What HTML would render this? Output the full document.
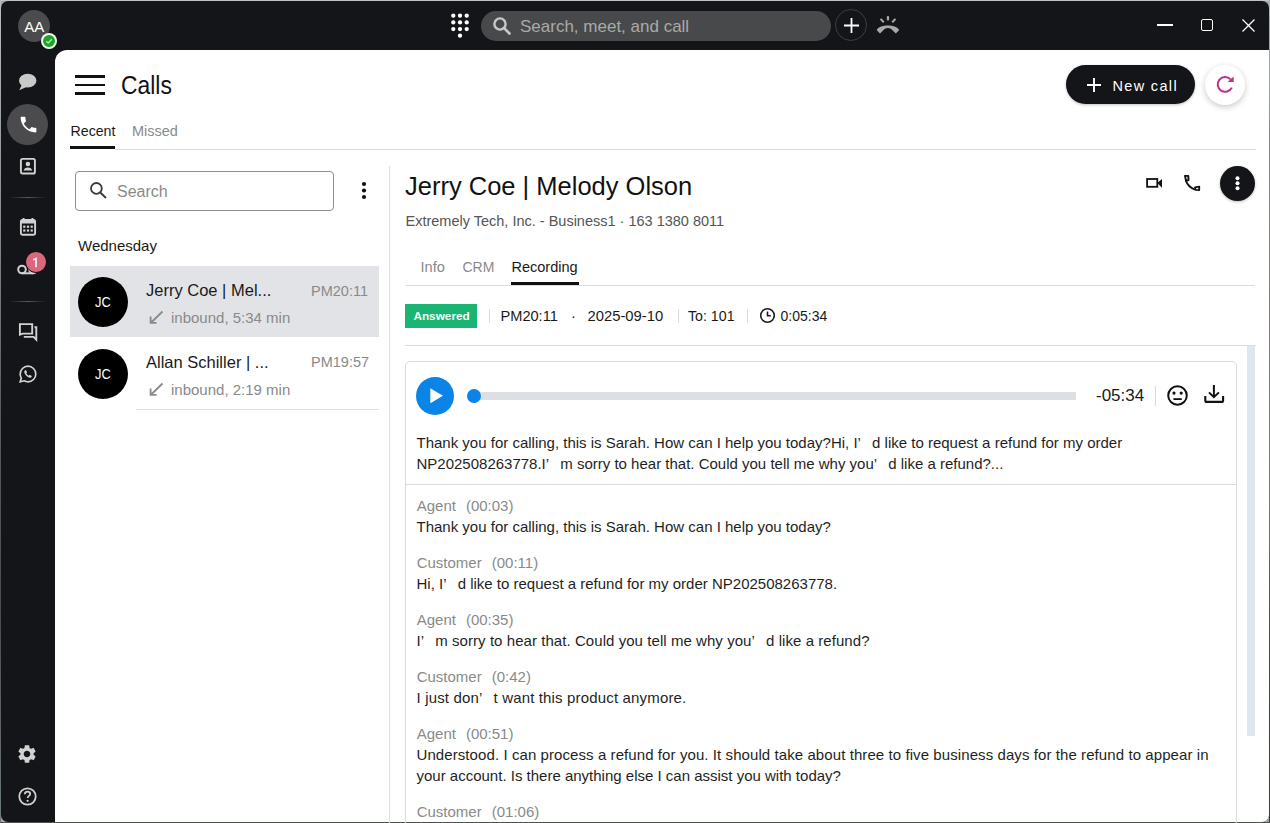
<!DOCTYPE html>
<html><head><meta charset="utf-8">
<style>
*{margin:0;padding:0;box-sizing:border-box}
html,body{width:1270px;height:823px;overflow:hidden;background:#a3a7aa;font-family:"Liberation Sans",sans-serif}
body{position:relative}
.a{position:absolute}
.t{position:absolute;white-space:nowrap;line-height:1}
svg{position:absolute;overflow:visible}
.q{display:inline-block;width:14.5px}
.lbl{font-size:15px;color:#8a8a8a}
.txt{font-size:15px;line-height:21px;color:#1f1f1f;white-space:nowrap}
</style></head><body>
<!-- window frame -->
<div class="a" style="left:0;top:0;width:1270px;height:1px;background:#bfc3c6"></div>
<div class="a" style="left:0;top:0;width:1px;height:823px;background:linear-gradient(#b9bdc0,#8c8f92 25%,#585a5e 50%,#4a4d50 75%,#6d7a74)"></div>
<div class="a" style="left:1269px;top:0;width:1px;height:823px;background:linear-gradient(#b0b4b6,#888 18%,#7a7570 61%,#4a4540 79%,#3a3a3a)"></div>
<div class="a" style="left:0;top:822px;width:1270px;height:1px;background:#505250"></div>
<div class="a" style="left:1px;top:1px;width:1268px;height:821px;background:#141518;border-radius:7px"></div>
<!-- white panel -->
<div class="a" style="left:55px;top:50px;width:1214px;height:772px;background:#fff;border-top-left-radius:12px;border-bottom-right-radius:7px"></div>

<!-- ===== TITLE BAR ===== -->
<div class="a" style="left:18px;top:10px;width:32px;height:32px;border-radius:50%;background:#4b4b4d"></div>
<div class="t" style="left:24.3px;top:19.2px;font-size:15px;color:#fff">AA</div>
<div class="a" style="left:41px;top:33px;width:16px;height:16px;border-radius:50%;background:#eaffea"></div>
<div class="a" style="left:43px;top:35px;width:12px;height:12px;border-radius:50%;background:#22a22c"></div>
<svg style="left:43px;top:35px" width="12" height="12" viewBox="0 0 12 12"><path d="M3.3 6.2 L5.2 8 L8.8 4.2" fill="none" stroke="#9ff59f" stroke-width="1.4"/></svg>

<!-- dialpad -->
<svg style="left:450px;top:13px" width="20" height="25" viewBox="0 0 20 25">
 <g fill="#fff">
  <circle cx="3.3" cy="2.7" r="2.15"/><circle cx="10" cy="2.7" r="2.15"/><circle cx="16.7" cy="2.7" r="2.15"/>
  <circle cx="3.3" cy="9.4" r="2.15"/><circle cx="10" cy="9.4" r="2.15"/><circle cx="16.7" cy="9.4" r="2.15"/>
  <circle cx="3.3" cy="16.1" r="2.15"/><circle cx="10" cy="16.1" r="2.15"/><circle cx="16.7" cy="16.1" r="2.15"/>
  <circle cx="10" cy="22.7" r="2.15"/>
 </g>
</svg>
<!-- search pill -->
<div class="a" style="left:481px;top:11px;width:350px;height:30px;border-radius:15px;background:#48494b"></div>
<svg style="left:492px;top:16px" width="20" height="20" viewBox="0 0 20 20"><circle cx="8" cy="8" r="5.6" fill="none" stroke="#c8c8c8" stroke-width="2.4"/><path d="M12 12 L17.5 17.5" stroke="#c8c8c8" stroke-width="2.6" stroke-linecap="round"/></svg>
<div class="t" style="left:520px;top:17.6px;font-size:17px;color:#a9a9a9">Search, meet, and call</div>
<!-- plus circle -->
<div class="a" style="left:835px;top:9px;width:32px;height:32px;border-radius:50%;border:1px solid #3c3d40"></div>
<svg style="left:844px;top:17.5px" width="15" height="15" viewBox="0 0 15 15"><path d="M7.5 0 V15 M0 7.5 H15" stroke="#fff" stroke-width="1.8"/></svg>
<!-- park/hangup icon -->
<svg style="left:876px;top:15px" width="24" height="19" viewBox="0 0 24 19">
 <g fill="#a9a9a9">
  <rect x="10.8" y="1" width="2.3" height="4.6" rx="1"/>
  <path d="M3.8 4.6 l1.5-1.4 3.2 3.3 -1.5 1.4z"/>
  <path d="M20.2 4.6 l-1.5-1.4 -3.2 3.3 1.5 1.4z"/>
  <path d="M0.6 15 C3 11.2 7 10.4 11.9 10.4 C16.8 10.4 20.8 11.2 23.2 15 L19.8 18.4 L16.2 14.9 C14.9 13.8 13.5 13.1 11.9 13.1 C10.3 13.1 8.9 13.8 7.6 14.9 L4 18.4 Z"/>
 </g>
</svg>
<!-- window controls -->
<div class="a" style="left:1157px;top:24px;width:16px;height:2px;background:#fff"></div>
<div class="a" style="left:1201px;top:19px;width:12px;height:12px;border:1.4px solid #fff;border-radius:2px"></div>
<svg style="left:1242px;top:19px" width="13" height="13" viewBox="0 0 13 13"><path d="M0.5 0.5 L12.5 12.5 M12.5 0.5 L0.5 12.5" stroke="#fff" stroke-width="1.3"/></svg>

<!-- ===== LEFT RAIL ===== -->
<!-- chat bubble -->
<svg style="left:18px;top:73px" width="19" height="18" viewBox="0 0 19 18"><ellipse cx="9.7" cy="7.7" rx="8.7" ry="6.9" fill="#c9c9c9"/><path d="M4 11.5 L1.2 17.2 L9 13.8 Z" fill="#c9c9c9"/></svg>
<!-- active phone -->
<div class="a" style="left:7px;top:104px;width:41px;height:41px;border-radius:50%;background:#4b4b4d"></div>
<svg style="left:17.5px;top:113.5px" width="21" height="21" viewBox="0 0 24 24"><path fill="#fff" d="M6.6 10.8c1.4 2.8 3.8 5.1 6.6 6.6l2.2-2.2c.3-.3.7-.4 1-.2 1.1.4 2.3.6 3.6.6.6 0 1 .4 1 1V20c0 .6-.4 1-1 1C10.6 21 3 13.4 3 4c0-.6.4-1 1-1h3.5c.6 0 1 .4 1 1 0 1.3.2 2.5.6 3.6.1.3 0 .7-.2 1l-2.3 2.2z"/></svg>
<!-- contacts -->
<svg style="left:19px;top:157px" width="18" height="18" viewBox="0 0 18 18"><rect x="1.9" y="1.9" width="14" height="14.6" rx="1.6" fill="none" stroke="#d2d2d2" stroke-width="1.9"/><circle cx="8.9" cy="7" r="2.3" fill="#d2d2d2"/><path d="M4.6 13.4 C5 11.3 6.6 10.4 8.9 10.4 C11.2 10.4 12.8 11.3 13.2 13.4Z" fill="#d2d2d2"/></svg>
<!-- divider -->
<div class="a" style="left:9px;top:197px;width:37px;height:1px;background:linear-gradient(90deg,rgba(80,80,80,0),#5a5a5a 50%,rgba(80,80,80,0))"></div>
<!-- calendar -->
<svg style="left:19px;top:217px" width="18" height="19" viewBox="0 0 18 19"><rect x="1.9" y="2.9" width="14.2" height="14.9" rx="1.8" fill="none" stroke="#d2d2d2" stroke-width="1.9"/><rect x="1.9" y="2.9" width="14.2" height="3.6" fill="#d2d2d2"/><path d="M4.6 1 V4 M13.4 1 V4" stroke="#d2d2d2" stroke-width="1.9"/><g fill="#d2d2d2"><rect x="4.2" y="8.6" width="2.2" height="2.2"/><rect x="7.9" y="8.6" width="2.2" height="2.2"/><rect x="11.6" y="8.6" width="2.2" height="2.2"/><rect x="4.2" y="12.4" width="2.2" height="2.2"/><rect x="7.9" y="12.4" width="2.2" height="2.2"/><rect x="11.6" y="12.4" width="2.2" height="2.2"/></g></svg>
<!-- voicemail -->
<svg style="left:17px;top:264px" width="21" height="11" viewBox="0 0 21 11"><circle cx="5" cy="5.5" r="3.8" fill="none" stroke="#d2d2d2" stroke-width="2"/><circle cx="16" cy="5.5" r="3.8" fill="none" stroke="#d2d2d2" stroke-width="2"/><path d="M5 9.3 H16" stroke="#d2d2d2" stroke-width="2"/></svg>
<div class="a" style="left:24.6px;top:250.6px;width:22.4px;height:22.4px;border-radius:50%;background:#d9687c;border:1.5px solid #160c10"></div>
<svg style="left:30px;top:256px" width="10" height="13" viewBox="0 0 10 13"><path d="M3.3 3.9 L6 2.5 V11.2" fill="none" stroke="#fff" stroke-width="1.5"/></svg>
<!-- divider 2 -->
<div class="a" style="left:9px;top:301px;width:37px;height:1px;background:linear-gradient(90deg,rgba(80,80,80,0),#5a5a5a 50%,rgba(80,80,80,0))"></div>
<!-- forum -->
<svg style="left:18px;top:322px" width="20" height="19" viewBox="0 0 20 19"><path d="M1.9 12.6 V2.1 H14.2 V11.6 H4.8 Z" fill="none" stroke="#d2d2d2" stroke-width="1.9" stroke-linejoin="miter"/><path d="M5.8 14.9 H15.6 L18.3 17.6 V5.3 H16.5" fill="none" stroke="#d2d2d2" stroke-width="1.9"/></svg>
<!-- whatsapp -->
<svg style="left:18.5px;top:364.8px" width="18" height="18" viewBox="0 0 18 18"><path d="M9 1.2 C13.3 1.2 16.8 4.7 16.8 9 C16.8 13.3 13.3 16.8 9 16.8 C7.6 16.8 6.3 16.4 5.1 15.8 L1.2 16.8 L2.3 13.1 C1.6 11.9 1.2 10.5 1.2 9 C1.2 4.7 4.7 1.2 9 1.2Z" fill="none" stroke="#d2d2d2" stroke-width="1.7"/><path d="M6.3 5.3 C6.7 5.1 7.1 5.2 7.3 5.6 L7.9 7 C8 7.3 7.9 7.6 7.6 7.9 L7.3 8.2 C7.8 9.2 8.7 10.1 9.8 10.7 L10.2 10.3 C10.5 10 10.8 10 11.1 10.1 L12.4 10.7 C12.8 10.9 12.9 11.3 12.7 11.7 C12.3 12.5 11.5 12.9 10.6 12.7 C8.3 12.1 5.9 9.7 5.3 7.4 C5.1 6.5 5.5 5.7 6.3 5.3Z" fill="#d2d2d2"/></svg>
<!-- settings -->
<svg style="left:16.3px;top:743px" width="22" height="22" viewBox="0 0 24 24"><path fill="#d2d2d2" d="M19.14 12.94c.04-.3.06-.61.06-.94 0-.32-.02-.64-.07-.94l2.030-1.58c.18-.14.23-.41.12-.61l-1.92-3.32c-.12-.22-.37-.29-.59-.22l-2.39.96c-.5-.38-1.03-.7-1.62-.94l-.36-2.540c-.04-.24-.24-.41-.48-.41h-3.84c-.24 0-.43.17-.47.41l-.36 2.54c-.59.24-1.13.57-1.62.94l-2.39-.96c-.22-.08-.47 0-.59.22L2.74 8.87c-.12.21-.08.47.12.61l2.03 1.58c-.05.3-.09.63-.09.94s.02.64.07.94l-2.03 1.58c-.18.14-.23.41-.12.61l1.92 3.32c.12.22.37.29.59.22l2.39-.96c.5.38 1.03.7 1.62.94l.36 2.54c.05.24.24.41.48.41h3.84c.24 0 .44-.17.47-.41l.36-2.54c.59-.24 1.13-.56 1.62-.94l2.39.96c.22.08.47 0 .59-.22l1.92-3.32c.12-.22.07-.47-.12-.61l-2.01-1.58zM12 15.6c-1.98 0-3.6-1.62-3.6-3.6s1.62-3.6 3.6-3.6 3.6 1.62 3.6 3.6-1.62 3.6-3.6 3.6z"/></svg>
<!-- help -->
<svg style="left:18px;top:787px" width="19" height="19" viewBox="0 0 19 19"><circle cx="9.5" cy="9.5" r="8.2" fill="none" stroke="#d0d0d0" stroke-width="1.8"/><path d="M6.8 7.2 C6.8 5.6 8 4.6 9.5 4.6 C11 4.6 12.2 5.6 12.2 7 C12.2 8.8 9.6 9 9.6 11" fill="none" stroke="#d0d0d0" stroke-width="1.8"/><circle cx="9.6" cy="13.8" r="1.1" fill="#d0d0d0"/></svg>

<!-- ===== CALLS HEADER ===== -->
<div class="a" style="left:75px;top:75px;width:30px;height:2.6px;background:#111"></div>
<div class="a" style="left:75px;top:83.7px;width:30px;height:2.6px;background:#111"></div>
<div class="a" style="left:75px;top:92.2px;width:30px;height:2.6px;background:#111"></div>
<div class="t" style="left:121.4px;top:73.1px;font-size:25px;color:#111;transform:scaleX(0.915);transform-origin:0 0">Calls</div>

<div class="t" style="left:70.5px;top:123.7px;font-size:14.2px;color:#1a1a1a">Recent</div>
<div class="t" style="left:132px;top:123.7px;font-size:14.5px;color:#8a8a8a">Missed</div>
<div class="a" style="left:70px;top:146px;width:45px;height:3px;background:#111"></div>
<div class="a" style="left:115px;top:149px;width:1141px;height:1px;background:#dcdcdc"></div>

<div class="a" style="left:1066px;top:65px;width:129px;height:39px;border-radius:20px;background:#141518;box-shadow:0 1px 3px rgba(0,0,0,.25)"></div>
<svg style="left:1087px;top:78px" width="14" height="14" viewBox="0 0 14 14"><path d="M7 0 V14 M0 7 H14" stroke="#fff" stroke-width="1.9"/></svg>
<div class="t" style="left:1112.5px;top:79px;font-size:14.5px;color:#fff;letter-spacing:1.33px">New call</div>
<div class="a" style="left:1205px;top:65px;width:40px;height:40px;border-radius:50%;background:#fff;box-shadow:0 2px 6px rgba(0,0,0,.22)"></div>
<svg style="left:1205px;top:65px" width="40" height="40" viewBox="0 0 40 40"><path d="M26.8 22.6 A7.4 7.4 0 1 1 25.6 14.4" fill="none" stroke="#b8358c" stroke-width="2.1"/><path d="M22.6 17 L28.8 17 L28.6 11.6 Z" fill="#b8358c"/></svg>

<!-- ===== LIST COLUMN ===== -->
<div class="a" style="left:75px;top:171px;width:259px;height:40px;border:1px solid #8e8e8e;border-radius:4px"></div>
<svg style="left:89px;top:181px" width="18" height="19" viewBox="0 0 18 19"><circle cx="7.4" cy="7.4" r="5.4" fill="none" stroke="#3a3a3a" stroke-width="1.8"/><path d="M11.3 11.5 L17 17" stroke="#3a3a3a" stroke-width="1.9"/></svg>
<div class="t" style="left:117px;top:183.6px;font-size:16px;color:#8a8a8a">Search</div>
<svg style="left:361px;top:181px" width="6" height="19" viewBox="0 0 6 19"><g fill="#111"><circle cx="3" cy="3" r="2.1"/><circle cx="3" cy="9.5" r="2.1"/><circle cx="3" cy="16" r="2.1"/></g></svg>
<div class="t" style="left:78px;top:238.3px;font-size:15px;color:#1a1a1a">Wednesday</div>
<div class="a" style="left:389px;top:166px;width:1px;height:657px;background:#dedede"></div>

<!-- row 1 selected -->
<div class="a" style="left:70px;top:266px;width:309px;height:71px;background:#e2e3e6"></div>
<div class="a" style="left:78px;top:277px;width:50px;height:50px;border-radius:50%;background:#000"></div>
<div class="t" style="left:78px;width:50px;text-align:center;top:294.3px;font-size:15px;color:#fff;transform:scaleX(0.86)">JC</div>
<div class="t" style="left:146px;top:282.4px;font-size:16.5px;color:#1a1a1a">Jerry Coe | Mel...</div>
<div class="t" style="left:311px;top:283.7px;font-size:14.5px;color:#8a8a8a">PM20:11</div>
<svg style="left:149px;top:310px" width="15" height="14" viewBox="0 0 15 14"><path d="M13.5 1.5 L2.2 12.5 M1.6 6.6 V12.9 H7.6" fill="none" stroke="#8a8a8a" stroke-width="1.8"/></svg>
<div class="t" style="left:171px;top:310.3px;font-size:15px;color:#8a8a8a">inbound, 5:34 min</div>

<!-- row 2 -->
<div class="a" style="left:78px;top:349px;width:50px;height:50px;border-radius:50%;background:#000"></div>
<div class="t" style="left:78px;width:50px;text-align:center;top:366.3px;font-size:15px;color:#fff;transform:scaleX(0.86)">JC</div>
<div class="t" style="left:146px;top:353.8px;font-size:16.5px;color:#1a1a1a">Allan Schiller | ...</div>
<div class="t" style="left:311px;top:355.1px;font-size:14.5px;color:#8a8a8a">PM19:57</div>
<svg style="left:149px;top:382px" width="15" height="14" viewBox="0 0 15 14"><path d="M13.5 1.5 L2.2 12.5 M1.6 6.6 V12.9 H7.6" fill="none" stroke="#8a8a8a" stroke-width="1.8"/></svg>
<div class="t" style="left:171px;top:382.3px;font-size:15px;color:#8a8a8a">inbound, 2:19 min</div>
<div class="a" style="left:136px;top:409px;width:243px;height:1px;background:#e0e0e0"></div>


<!-- ===== DETAIL ===== -->
<div class="t" style="left:405px;top:173.6px;font-size:25.5px;color:#111">Jerry Coe | Melody Olson</div>
<div class="t" style="left:405.5px;top:213.7px;font-size:14.5px;color:#555">Extremely Tech, Inc. - Business1 · 163 1380 8011</div>
<!-- video icon -->
<svg style="left:1146px;top:178px" width="17" height="11" viewBox="0 0 17 11"><rect x="1.1" y="1" width="10.2" height="7.8" fill="none" stroke="#111" stroke-width="1.8"/><path d="M11.3 5 L16 1.1 V9.7 Z" fill="#111"/></svg>
<!-- phone outline icon -->
<svg style="left:1178px;top:170px" width="28" height="26" viewBox="0 0 28 26"><path d="M7 5.9 H10.3 L10.5 10.2 L8 10.9 Z" fill="none" stroke="#111" stroke-width="1.9" stroke-linejoin="round"/><path d="M8 10.9 C9.2 14.6 12.4 17.8 17 19.6" fill="none" stroke="#111" stroke-width="1.8"/><path d="M17 17.4 L21.2 16.6 V20.1 L17.6 19.9 Z" fill="none" stroke="#111" stroke-width="1.9" stroke-linejoin="round"/></svg>
<!-- kebab circle -->
<div class="a" style="left:1220px;top:166px;width:35px;height:35px;border-radius:50%;background:#141518;box-shadow:0 1px 3px rgba(0,0,0,.25)"></div>
<svg style="left:1235px;top:176px" width="5" height="15" viewBox="0 0 5 15"><g fill="#fff"><circle cx="2.5" cy="2.2" r="2"/><circle cx="2.5" cy="7.2" r="2"/><circle cx="2.5" cy="12.2" r="2"/></g></svg>

<!-- tabs -->
<div class="t" style="left:420.5px;top:259.9px;font-size:14.6px;color:#8a8a8a">Info</div>
<div class="t" style="left:462.5px;top:259.9px;font-size:14px;color:#8a8a8a">CRM</div>
<div class="t" style="left:511.5px;top:259.9px;font-size:14.5px;color:#1a1a1a">Recording</div>
<div class="a" style="left:511px;top:282px;width:68px;height:3px;background:#111"></div>
<div class="a" style="left:405px;top:285px;width:850px;height:1px;background:#dcdcdc"></div>

<!-- meta row -->
<div class="a" style="left:405px;top:304px;width:72px;height:24px;background:#1ab473"></div>
<div class="t" style="left:413.4px;top:311.1px;font-size:11.8px;font-weight:bold;color:#f4fff8">Answered</div>
<div class="a" style="left:489px;top:309px;width:1px;height:14px;background:#dadada"></div>
<div class="t" style="left:500.5px;top:308.9px;font-size:14.6px;color:#1a1a1a">PM20:11</div>
<div class="t" style="left:571px;top:308.9px;font-size:14.5px;color:#1a1a1a">·</div>
<div class="t" style="left:587.5px;top:308.9px;font-size:14.8px;color:#1a1a1a">2025-09-10</div>
<div class="a" style="left:678px;top:309px;width:1px;height:14px;background:#dadada"></div>
<div class="t" style="left:688px;top:308.9px;font-size:14.2px;color:#1a1a1a">To: 101</div>
<div class="a" style="left:747px;top:309px;width:1px;height:14px;background:#dadada"></div>
<svg style="left:759px;top:306.5px" width="17" height="17" viewBox="0 0 17 17"><circle cx="8.5" cy="8.5" r="6.8" fill="none" stroke="#1a1a1a" stroke-width="1.6"/><path d="M8.5 4.5 V8.8 H11.8" fill="none" stroke="#1a1a1a" stroke-width="1.6"/></svg>
<div class="t" style="left:780.5px;top:308.9px;font-size:14px;color:#1a1a1a">0:05:34</div>
<div class="a" style="left:405px;top:345px;width:851px;height:1px;background:#dcdcdc"></div>

<!-- scrollbar -->
<div class="a" style="left:1247px;top:346px;width:8px;height:390px;background:#e0e6ef"></div>

<!-- card -->
<div class="a" style="left:405px;top:361px;width:832px;height:480px;border:1px solid #dcdcdc;border-radius:5px"></div>
<div class="a" style="left:416px;top:376.5px;width:38px;height:38px;border-radius:50%;background:#0b84e8"></div>
<svg style="left:430px;top:388px" width="14" height="16" viewBox="0 0 14 16"><path d="M0.3 0.3 L13 7.8 L0.3 15.3Z" fill="#fff"/></svg>
<div class="a" style="left:474px;top:392px;width:602px;height:8px;background:#dcdfe3"></div>
<div class="a" style="left:467px;top:389px;width:14px;height:14px;border-radius:50%;background:#0b84e8"></div>
<div class="t" style="left:1096px;top:386.5px;font-size:17px;color:#1a1a1a">-05:34</div>
<div class="a" style="left:1155px;top:386px;width:1px;height:20px;background:#dadada"></div>
<svg style="left:1167px;top:385px" width="21" height="21" viewBox="0 0 21 21"><circle cx="10.5" cy="10.5" r="9.3" fill="none" stroke="#111" stroke-width="2"/><circle cx="7" cy="8.1" r="1.6" fill="#111"/><circle cx="14.2" cy="8.1" r="1.6" fill="#111"/><path d="M6.4 14.1 H14.8" stroke="#111" stroke-width="1.8"/></svg>
<svg style="left:1203px;top:384px" width="22" height="20" viewBox="0 0 22 20"><path d="M10.9 1 V13 M6 8.4 L10.9 13.2 L15.9 8.4" fill="none" stroke="#111" stroke-width="2"/><path d="M2.3 12 V16.4 Q2.3 17.9 3.8 17.9 H18.6 Q20.1 17.9 20.1 16.4 V12" fill="none" stroke="#111" stroke-width="2.1"/></svg>
<div class="a" style="left:416.5px;top:431.6px;font-size:15px;line-height:21px;color:#1f1f1f;white-space:nowrap">Thank you for calling, this is Sarah. How can I help you today?Hi, I<span class="q">’</span>d like to request a refund for my order<br>NP202508263778.I<span class="q">’</span>m sorry to hear that. Could you tell me why you<span class="q">’</span>d like a refund?...</div>
<div class="a" style="left:406px;top:484px;width:830px;height:1px;background:#dcdcdc"></div>
<div class="t lbl" style="left:416.7px;top:497.9px">Agent<span style="display:inline-block;width:10px"></span>(00:03)</div>
<div class="a txt" style="left:416.5px;top:515.9px">Thank you for calling, this is Sarah. How can I help you today?</div>
<div class="t lbl" style="left:416.7px;top:554.9px">Customer<span style="display:inline-block;width:10px"></span>(00:11)</div>
<div class="a txt" style="left:416.5px;top:572.9px">Hi, I<span class="q">’</span>d like to request a refund for my order NP202508263778.</div>
<div class="t lbl" style="left:416.7px;top:611.9px">Agent<span style="display:inline-block;width:10px"></span>(00:35)</div>
<div class="a txt" style="left:416.5px;top:629.9px"><span style="letter-spacing:0.06px">I<span class="q">’</span>m sorry to hear that. Could you tell me why you<span class="q">’</span>d like a refund?</span></div>
<div class="t lbl" style="left:416.7px;top:668.9px">Customer<span style="display:inline-block;width:10px"></span>(0:42)</div>
<div class="a txt" style="left:416.5px;top:686.9px"><span style="letter-spacing:0.16px">I just don<span class="q">’</span>t want this product anymore.</span></div>
<div class="t lbl" style="left:416.7px;top:725.9px">Agent<span style="display:inline-block;width:10px"></span>(00:51)</div>
<div class="a txt" style="left:416.5px;top:743.9px"><span style="letter-spacing:0.083px">Understood. I can process a refund for you. It should take about three to five business days for the refund to appear in</span><br>your account. Is there anything else I can assist you with today?</div>
<div class="t lbl" style="left:416.7px;top:803.9px">Customer<span style="display:inline-block;width:10px"></span>(01:06)</div>

</body></html>
